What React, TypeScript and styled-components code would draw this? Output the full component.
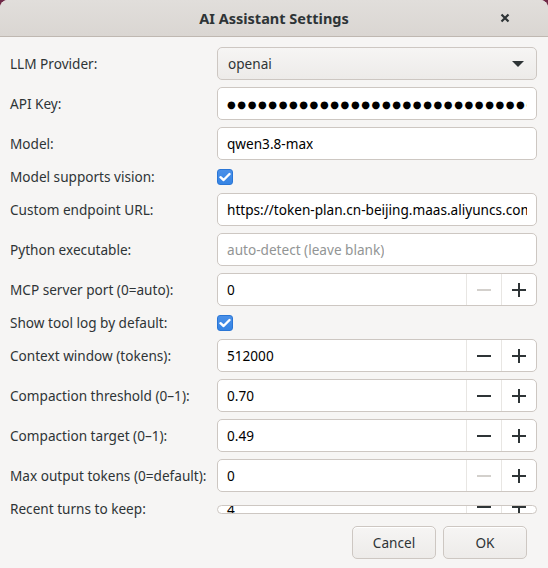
import styled, { createGlobalStyle } from 'styled-components';

const GlobalStyle = createGlobalStyle`
	html, body {
		margin: 0;
		padding: 0;
		background: #6f2947;
	}
	body {
		font-family: 'Noto Sans', 'DejaVu Sans', sans-serif;
		color: #2e3436;
	}
`;

type Field =
	| { kind: 'combo'; label: string; value: string }
	| { kind: 'entry'; label: string; value: string; password?: boolean; placeholder?: boolean }
	| { kind: 'check'; label: string }
	| { kind: 'spin'; label: string; value: string; minusOff?: boolean; squashed?: boolean };

const fields: Field[] = [
	{ kind: 'combo', label: 'LLM Provider:', value: 'openai' },
	{ kind: 'entry', label: 'API Key:', value: '●'.repeat(40), password: true },
	{ kind: 'entry', label: 'Model:', value: 'qwen3.8-max' },
	{ kind: 'check', label: 'Model supports vision:' },
	{ kind: 'entry', label: 'Custom endpoint URL:', value: 'https://token-plan.cn-beijing.maas.aliyuncs.com/compatible-mode/v1' },
	{ kind: 'entry', label: 'Python executable:', value: 'auto-detect (leave blank)', placeholder: true },
	{ kind: 'spin', label: 'MCP server port (0=auto):', value: '0', minusOff: true },
	{ kind: 'check', label: 'Show tool log by default:' },
	{ kind: 'spin', label: 'Context window (tokens):', value: '512000' },
	{ kind: 'spin', label: 'Compaction threshold (0–1):', value: '0.70' },
	{ kind: 'spin', label: 'Compaction target (0–1):', value: '0.49' },
	{ kind: 'spin', label: 'Max output tokens (0=default):', value: '0', minusOff: true },
	{ kind: 'spin', label: 'Recent turns to keep:', value: '4', squashed: true },
];

const Minus = ({ off }: { off?: boolean }) => (
	<svg width="16" height="16" viewBox="0 0 16 16">
		<rect x="1" y="7" width="14" height="2" fill={off ? '#d3d0cc' : '#2e3436'} />
	</svg>
);

const Plus = () => (
	<svg width="16" height="16" viewBox="0 0 16 16">
		<rect x="1" y="7" width="14" height="2" fill="#2e3436" />
		<rect x="7" y="1" width="2" height="14" fill="#2e3436" />
	</svg>
);

const renderControl = (f: Field) => {
	switch (f.kind) {
		case 'combo':
			return (
				<Combo>
					<span>{f.value}</span>
					<Arrow />
				</Combo>
			);
		case 'entry':
			return (
				<Entry $placeholder={f.placeholder}>
					<EntryText $dots={f.password}>{f.value}</EntryText>
				</Entry>
			);
		case 'check':
			return (
				<CheckCell>
					<CheckBox>
						<svg width="12" height="10" viewBox="0 0 12 10">
							<path d="M1.5 5.2 L4.6 8 L10.5 2" fill="none" stroke="#fff" strokeWidth="2.4" strokeLinecap="round" strokeLinejoin="round" />
						</svg>
					</CheckBox>
				</CheckCell>
			);
		case 'spin':
			return (
				<Spin $squashed={f.squashed}>
					<SpinText $squashed={f.squashed}>{f.value}</SpinText>
					<SpinButton $squashed={f.squashed}>
						<Minus off={f.minusOff} />
					</SpinButton>
					<SpinButton $squashed={f.squashed}>
						<Plus />
					</SpinButton>
				</Spin>
			);
	}
};

export default function App() {
	return (
		<>
			<GlobalStyle />
			<Window>
				<TitleBar>
					<Title>AI Assistant Settings</Title>
					<CloseButton>
						<svg width="10" height="10" viewBox="0 0 10 10">
							<path d="M1.5 1.5 L8.5 8.5 M8.5 1.5 L1.5 8.5" stroke="#2e3436" strokeWidth="2.2" />
						</svg>
					</CloseButton>
				</TitleBar>
				<Body>
					<Grid>
						{fields.map((f) => (
							<Row key={f.label} $kind={f.kind} $squashed={f.kind === 'spin' && f.squashed}>
								<Label>{f.label}</Label>
								{renderControl(f)}
							</Row>
						))}
					</Grid>
				</Body>
				<Actions>
					<Button>Cancel</Button>
					<Button>OK</Button>
				</Actions>
			</Window>
		</>
	);
}

const Window = styled.div`
	width: 548px;
	height: 568px;
	background: #f6f5f4;
	border-radius: 8px 8px 0 0;
	overflow: hidden;
	display: flex;
	flex-direction: column;
`;

const TitleBar = styled.div`
	height: 36px;
	flex: none;
	display: flex;
	align-items: center;
	justify-content: center;
	position: relative;
	background: linear-gradient(#e1dedb, #dad6d2);
	border-bottom: 1px solid #bfb8b1;
`;

const Title = styled.div`
	font-size: 14.5px;
	font-weight: 700;
	color: #2e3436;
`;

const CloseButton = styled.div`
	position: absolute;
	right: 38px;
	top: 13px;
	width: 10px;
	height: 10px;
	display: flex;
`;

const Body = styled.div`
	height: 471px;
	flex: none;
	padding: 10px 11px 0 10px;
	box-sizing: border-box;
`;

const Grid = styled.div`
	display: flex;
	flex-direction: column;
	gap: 7px;
`;

const Row = styled.div<{ $kind: string; $squashed?: boolean }>`
	display: grid;
	grid-template-columns: 207px 320px;
	align-items: center;
	height: ${({ $kind, $squashed }) => ($squashed ? '9px' : $kind === 'check' ? '19px' : '33px')};
`;

const Label = styled.div`
	font-size: 13.6px;
	color: #2e3436;
	white-space: nowrap;
	line-height: 20px;
`;

const fieldBase = `
	box-sizing: border-box;
	height: 33px;
	border: 1px solid #cdc7c2;
	border-radius: 5px;
	font-size: 13.6px;
	display: flex;
	align-items: center;
	overflow: hidden;
`;

const Combo = styled.div`
	${fieldBase}
	padding: 0 10px 0 10px;
	justify-content: space-between;
	background: linear-gradient(#f6f5f4, #edebe9);
	color: #2e3436;
`;

const Arrow = styled.span`
	width: 0;
	height: 0;
	border-left: 6px solid transparent;
	border-right: 6px solid transparent;
	border-top: 6px solid #2e3436;
	margin-right: 2px;
`;

const Entry = styled.div<{ $placeholder?: boolean }>`
	${fieldBase}
	padding: 0 9px 0 9px;
	background: #fff;
	color: ${({ $placeholder }) => ($placeholder ? '#929595' : '#000')};
`;

const EntryText = styled.span<{ $dots?: boolean }>`
	display: block;
	overflow: hidden;
	white-space: nowrap;
	font-size: ${({ $dots }) => ($dots ? '10px' : 'inherit')};
	letter-spacing: ${({ $dots }) => ($dots ? '1.6px' : '0')};
`;

const CheckCell = styled.div`
	display: flex;
	align-items: center;
`;

const CheckBox = styled.div`
	width: 16px;
	height: 16px;
	border-radius: 3px;
	background: linear-gradient(#4a90e8, #3584e4);
	border: 1px solid #2a76d6;
	box-sizing: border-box;
	display: flex;
	align-items: center;
	justify-content: center;
`;

const Spin = styled.div<{ $squashed?: boolean }>`
	${fieldBase}
	height: ${({ $squashed }) => ($squashed ? '9px' : '33px')};
	background: #fff;
	align-items: stretch;
`;

const SpinText = styled.div<{ $squashed?: boolean }>`
	flex: 1;
	padding-left: 9px;
	color: #000;
	display: flex;
	align-items: center;
	line-height: 20px;
	margin-top: ${({ $squashed }) => ($squashed ? '2px' : '0')};
`;

const SpinButton = styled.div<{ $squashed?: boolean }>`
	width: 34px;
	flex: none;
	border-left: 1px solid #e8e6e3;
	display: flex;
	align-items: center;
	justify-content: center;
	margin-top: ${({ $squashed }) => ($squashed ? '-4px' : '0')};
`;

const Actions = styled.div`
	display: flex;
	justify-content: flex-end;
	gap: 7px;
	padding: 18px 21px 0 0;
`;

const Button = styled.div`
	width: 84px;
	height: 33px;
	box-sizing: border-box;
	border: 1px solid #cdc7c2;
	border-radius: 5px;
	background: linear-gradient(#f6f5f4, #edebe9);
	box-shadow: inset 0 1px #fff;
	font-size: 13.6px;
	color: #2e3436;
	display: flex;
	align-items: center;
	justify-content: center;
`;
